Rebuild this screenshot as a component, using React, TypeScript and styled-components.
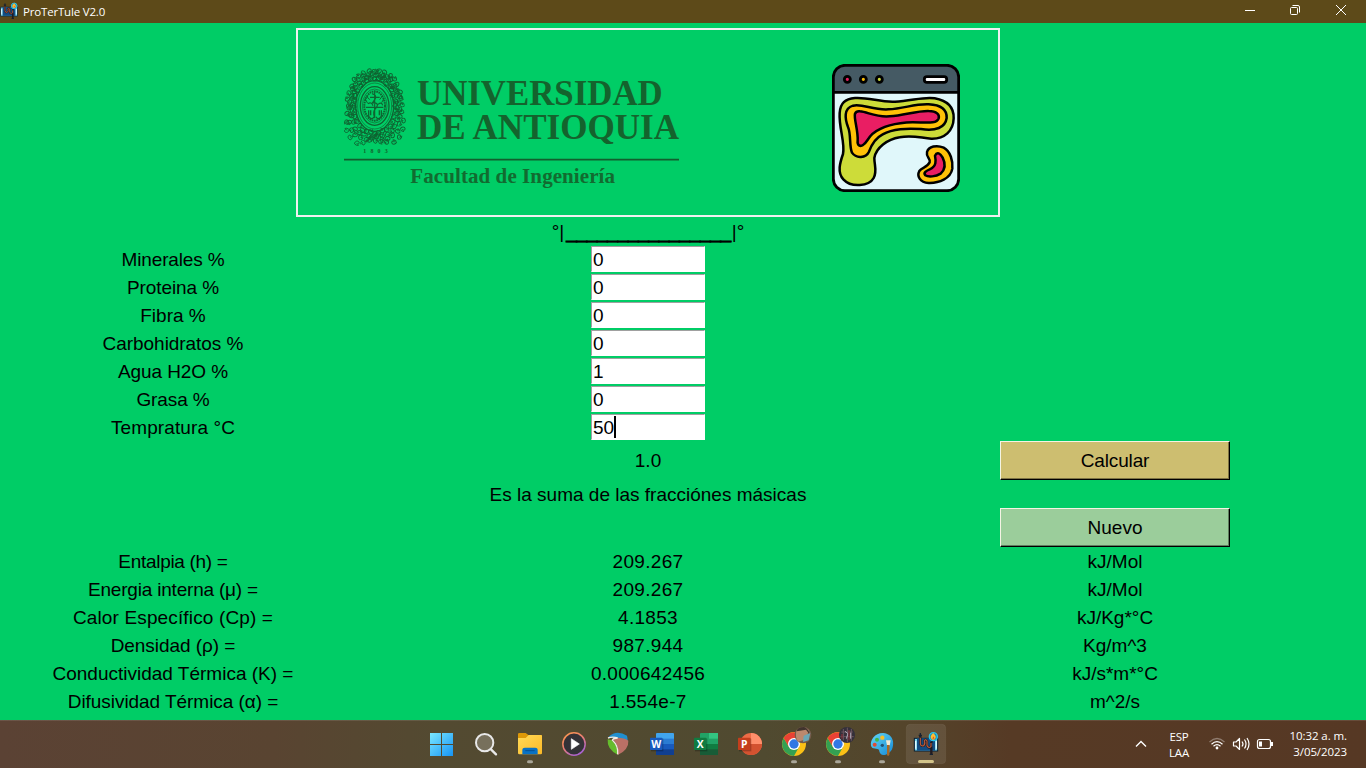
import React from 'react';
import styled, { createGlobalStyle } from 'styled-components';

const GlobalStyle = createGlobalStyle`
  html, body { margin: 0; padding: 0; }
  body { width: 1366px; height: 768px; overflow: hidden; background: #00cd66; }
  svg { display: block; flex: none; }
`;

const ui = `'Open Sans', 'Noto Sans', sans-serif`;

const Screen = styled.div`
  width: 1366px;
  height: 768px;
  display: flex;
  flex-direction: column;
`;

const TitleBar = styled.header`
  height: 23px;
  flex: none;
  display: flex;
  align-items: center;
  background: #5d4a19;
  color: #fff;
`;

const Title = styled.span`
  flex: 1;
  margin-left: 5px;
  font: 11.5px/23px ${ui};
  letter-spacing: -0.18px;
`;

const Client = styled.main`
  height: 697px;
  flex: none;
  box-sizing: border-box;
  padding: 5px 0 0 50px;
  background: #00cd66;
  font: 19px/28px 'Liberation Sans', Arial, sans-serif;
  color: #000;
`;

const Grid = styled.div`
  display: grid;
  grid-template-columns: 246px 704px 230px;
  grid-template-rows: 189px repeat(8, 28px) 39px 28px 39px repeat(6, 28px);
`;

const Banner = styled.div`
  grid-column: 2;
  box-sizing: border-box;
  border: 2px solid #f0f0f0;
  display: flex;
  justify-content: space-between;
  padding: 34px 38px 0 42px;
`;

const Cell = styled.div<{ $col: number; $row?: number; $tall?: boolean; $track?: number }>`
  grid-column: ${p => p.$col};
  grid-row: ${p => p.$row ?? 'auto'};
  height: ${p => (p.$tall ? 39 : 28)}px;
  text-align: center;
  white-space: nowrap;
  line-height: ${p => (p.$tall ? 39 : 30)}px;
  letter-spacing: ${p => p.$track ?? 0}px;
`;

const Rule = styled(Cell)`
  line-height: 29px;
`;

const Dashes = styled.span`
  letter-spacing: -0.28px;
  margin: 0 1px 0 2px;
  -webkit-text-stroke: 0.9px #000;
`;

const Entry = styled.div`
  grid-column: 2;
  justify-self: center;
  box-sizing: border-box;
  width: 114px;
  height: 26px;
  margin-top: 1px;
  padding-left: 1px;
  border: 1px solid #fff;
  border-top-color: #a0a0a0;
  border-left-color: #a0a0a0;
  background: #fff;
  display: flex;
  align-items: flex-start;
  line-height: 26px;
`;

const Caret = styled.span`
  width: 2px;
  height: 22px;
  margin-top: 1px;
  background: #000;
`;

const Button = styled.button<{ $bg: string; $shade: string }>`
  grid-column: 3;
  box-sizing: border-box;
  height: 39px;
  padding: 0;
  border: 1px solid #000;
  border-top-color: #f4f4e4;
  border-left-color: #f4f4e4;
  border-radius: 0;
  box-shadow: inset -1px -1px 0 ${p => p.$shade};
  background: ${p => p.$bg};
  font: inherit;
  letter-spacing: -0.15px;
  color: #000;
`;

const ResetButton = styled(Button)`
  grid-row: 12;
  letter-spacing: 0;
`;

const TaskBar = styled.footer`
  height: 48px;
  flex: none;
  box-sizing: border-box;
  display: flex;
  align-items: stretch;
  justify-content: space-between;
  padding-left: 419px;
  background:
    linear-gradient(180deg, rgba(255,255,255,.1) 0 1px, transparent 1px),
    linear-gradient(90deg, #5b4234 0%, #594431 20%, #534a31 32%, #504a30 56%, #54452b 66%, #563a25 74%, #563824 100%);
`;

const Apps = styled.div`
  display: flex;
`;

const Tray = styled.div`
  width: 227px;
  display: flex;
  color: #fff;
  font: 11.5px/16px ${ui};
  padding: 8px 19px 0 0;
`;

const Language = styled.div`
  width: 42px;
  padding-top: 1px;
  text-align: center;
  letter-spacing: -0.2px;
`;

const Clock = styled.div`
  flex: 1;
  text-align: right;
  letter-spacing: -0.08px;
  white-space: nowrap;
`;

const TrayIcons = styled.div`
  width: 80px;
  margin-top: -8px;
`;

const LogoSvg = styled.svg`
  overflow: visible;
`;

/* Scrolled foliage that surrounds the oval of the coat of arms */
const leaves = Array.from({ length: 128 }, (_, i) => {
  const ring = i % 4;
  const a = (Math.floor(i / 4) * 2 * Math.PI) / 32 + ring * 0.06;
  const rx = 60 + ring * 6 + ((i * 7) % 5);
  const ry = 80 + ring * 7 + ((i * 5) % 6);
  const c = Math.cos(a);
  const s = Math.sin(a);
  const diagonal = (2 * c * s) ** 2;
  const k = 1 + diagonal * (s > 0 ? 0.05 + ring * 0.085 : ring * 0.02);
  return { x: 134 + c * rx * k, y: 152 + s * ry * k, r: (i * 67) % 360 };
});

const UniversityLogo = () => (
  <LogoSvg width="340" height="125" viewBox="30 27 1020 375">
    <g fill="none" stroke="#0f6331">
      {leaves.map((l, i) => (
        <path
          key={i}
          transform={`translate(${l.x} ${l.y}) rotate(${l.r})`}
          d="M-7 3C-6-6 4-8 7-2C8 4 1 6 0 1M-6 4Q0 9 6 7"
          strokeWidth="2.9"
        />
      ))}
      <ellipse cx="134" cy="153" rx="57" ry="76" strokeWidth="4" />
      <ellipse cx="134" cy="153" rx="51" ry="69" strokeWidth="2" />
      <ellipse cx="134" cy="153" rx="43" ry="58" strokeWidth="4" />
      <ellipse cx="134" cy="153" rx="37" ry="51" strokeWidth="2" />
      <ellipse cx="134" cy="153" rx="31" ry="44" strokeWidth="6" strokeDasharray="5 2" />
      <path d="M134 110V190M120 127H149M126 116Q141 120 136 131L127 144Q149 142 139 158Q126 171 134 186M108 157H160M114 146Q124 139 129 152M144 148Q155 139 158 151" strokeWidth="3.5" />
      <path d="M116 166V184Q126 198 132 185M122 166V181M154 166V184Q144 198 138 185M148 166V181" strokeWidth="4" />
      <path d="M113 145L105 131M155 143L162 130M119 134L110 124M149 134L157 123" strokeWidth="3" />
    </g>
    <path d="M42 314H1047" stroke="#125f2e" strokeWidth="5" />
    <g fill="#14632d" fontFamily="'Liberation Serif', serif" fontWeight="bold">
      <text x="100" y="293" fontSize="18" textLength="73">1803</text>
      <text x="261" y="151" fontSize="107" textLength="737" lengthAdjust="spacingAndGlyphs">UNIVERSIDAD</text>
      <text x="261" y="251" fontSize="107" textLength="786" lengthAdjust="spacingAndGlyphs">DE ANTIOQUIA</text>
      <text x="241" y="384" fontSize="63" textLength="614" fill="#126b30">Facultad de Ingeniería</text>
    </g>
  </LogoSvg>
);

const HeatMapIcon = () => (
  <svg width="128" height="128" viewBox="36 27 384 384">
    <rect x="40" y="31" width="376" height="376" rx="35" fill="#e0f7fa" />
    <path d="M40 112V66Q40 31 75 31H381Q416 31 416 66V112Z" fill="#455a64" />
    <g stroke="#000" strokeWidth="8.5" strokeLinejoin="round">
      <path d="M40 112H416" />
      <rect x="40" y="31" width="376" height="376" rx="35" fill="none" />
      <circle cx="82" cy="73" r="9" fill="#e91e63" />
      <circle cx="130" cy="73" r="9" fill="#ffc107" />
      <circle cx="178" cy="73" r="9" fill="#cddc39" />
      <rect x="313" y="65" width="67" height="17" rx="8" fill="#fff" />
      <g strokeWidth="7.5">
        <path fill="#cddc39" d="M105 129C145 126 184 143 225 140C274 138 313 124 344 130C383 137 402 158 401 190C400 228 374 252 334 251C303 249 276 239 239 247C202 253 168 278 163 309C163 331 172 349 161 369C147 394 94 399 70 373C51 352 60 323 69 297C76 263 56 218 59 174C61 144 75 132 105 129Z" />
        <path fill="#ffc107" d="M99 152C127 145 159 166 205 163C253 161 283 146 326 148C363 150 381 164 380 189C376 218 347 229 303 222C260 220 219 220 188 238C163 251 154 270 147 290C138 309 109 312 96 293C87 274 94 239 84 216C75 193 70 160 99 152Z" />
        <path fill="#e91e63" d="M120 169C143 171 169 188 209 184C253 181 291 167 326 168C351 168 359 180 356 190C350 208 318 202 278 202C230 203 184 216 158 236C143 250 140 264 129 270C121 276 111 271 113 258C115 227 101 191 105 176C108 169 113 168 120 169Z" />
        <path fill="#ffc107" d="M321 291C326 274 350 269 371 278C392 289 399 319 397 341C392 371 357 385 326 384C299 382 290 363 298 348C305 337 323 337 329 322C333 311 317 307 321 291Z" />
        <path fill="#e91e63" d="M345 302C351 289 361 295 368 308C377 326 376 343 362 356C347 365 325 367 316 361C309 354 319 347 329 343C350 334 348 317 345 302Z" />
      </g>
    </g>
  </svg>
);

const PipeGlyph = () => (
  <g>
    <rect x="433" y="70" width="70" height="38" fill="#78d5ec" stroke="#0a1e30" strokeWidth="3" />
    <rect x="441" y="70" width="54" height="37" fill="#124d83" />
    <path d="M437 78V101M499 78V101" stroke="#dff8ff" strokeWidth="4" />
    <path d="M451 63V85Q452 95 461 92Q467 86 463 78Q466 70 471 78V92Q477 102 483 94V86Q484 80 488 82M484 94V120" fill="none" stroke="#211b22" strokeWidth="7" />
    <path d="M451 66V85Q452 95 461 92Q467 86 463 78Q466 70 471 78V92Q477 102 483 94V84" fill="none" stroke="#b85a3b" strokeWidth="3.5" />
    <path d="M451 54V68M446 61H456M479 118H489" stroke="#172231" strokeWidth="4" />
    <circle cx="490" cy="65" r="12" fill="#148bb4" stroke="#2ac5ee" strokeWidth="4" />
    <path d="M490 54Q503 67 493 74H486Q476 65 490 54Z" fill="#ffbd32" />
    <path d="M490 64L494 71H487Z" fill="#dd572b" />
  </g>
);

const Chrome = ({ cx }: { cx: number }) => (
  <g transform={`translate(${cx} 87)`}>
    <circle r="36" fill="#fbc116" />
    <path d="M-31-18A36 36 0 0 0 0 36L15 9L-15 9Z" fill="#34a052" />
    <path d="M-31-18L-15 9L0 0L0-17H31A36 36 0 0 0-31-18Z" fill="#e94235" />
    <circle r="18" fill="#fff" />
    <circle r="14" fill="#3178e4" />
  </g>
);

const Slot = ({ box, children }: { box: string; children: React.ReactNode }) => (
  <svg width="44" height="48" viewBox={`${box} 132 144`}>{children}</svg>
);

const Dot = ({ x, y }: { x: number; y: number }) => (
  <rect x={x - 9} y={y - 4.5} width="18" height="9" rx="4.5" fill="#aaa699" />
);

const OfficeMark = ({ x, fill, letter }: { x: number; fill: string; letter: string }) => (
  <g>
    <rect x={x + 3} y="56" width="37" height="38" fill="#000" opacity=".25" />
    <rect x={x} y="53" width="37" height="37" rx="2" fill={fill} />
    <text x={x + 18.5} y="83" textAnchor="middle" fontFamily="'Open Sans', sans-serif" fontWeight="bold" fontSize="31" fill="#fff">{letter}</text>
  </g>
);

const TaskIcons = () => (
  <Apps>
    <Slot box="-3 0">
      <defs>
        <linearGradient id="win" x1="30" y1="39" x2="99" y2="108" gradientUnits="userSpaceOnUse">
          <stop stopColor="#7be8ff" /><stop offset="1" stopColor="#1694f5" />
        </linearGradient>
      </defs>
      <path fill="url(#win)" d="M30 39H63V72H30ZM66 39H99V72H66ZM30 75H63V108H30ZM66 75H99V108H66Z" />
    </Slot>
    <Slot box="129 0">
      <circle cx="194" cy="68" r="26" fill="#77705c" stroke="#e8e8e8" strokeWidth="6" />
      <path d="M213 88L228 103" stroke="#e8e8e8" strokeWidth="7" strokeLinecap="round" />
    </Slot>
    <Slot box="261 0">
      <defs>
        <linearGradient id="folder" x1="0" y1="0" x2="1" y2="1">
          <stop stopColor="#ffda58" /><stop offset="1" stopColor="#fcb927" />
        </linearGradient>
      </defs>
      <path d="M294 58V42Q294 39 298 39H317L325 45H363Q366 45 366 49V58Z" fill="#dd9808" />
      <path d="M294 54H317L326 45H363Q366 45 366 49V100Q366 103 362 103H298Q294 103 294 99Z" fill="url(#folder)" />
      <path d="M307 103V89Q307 83 314 83H346Q353 83 353 89V103Z" fill="#0972c4" />
      <path d="M316 92H344" stroke="#054f91" strokeWidth="3" />
      <Dot x={330} y={125} />
    </Slot>
    <Slot box="393 0">
      <defs>
        <linearGradient id="media" x1="0" y1="0" x2="0.6" y2="1">
          <stop stopColor="#ff9b4a" /><stop offset=".5" stopColor="#ea7f70" /><stop offset="1" stopColor="#aa62ce" />
        </linearGradient>
      </defs>
      <circle cx="462" cy="72" r="33.5" fill="#333237" stroke="url(#media)" strokeWidth="4.5" />
      <path d="M454 56L478 72L454 88Z" fill="#fff" stroke="#fff" strokeWidth="2" strokeLinejoin="round" />
    </Slot>
    <Slot box="15 0">
      <path d="M56 50Q80 28 111 47Q113 55 113 62L74 56Z" fill="#208fd0" />
      <path d="M74 54Q99 51 115 62Q117 89 83 105Q89 79 70 59Z" fill="#ba7066" />
      <path d="M53 58Q50 88 83 104Q86 77 64 60Z" fill="#65bd2d" />
      <path d="M54 54Q68 49 83 54Q71 54 67 60Q86 78 83 103" fill="none" stroke="#f1ebe1" strokeWidth="4" />
    </Slot>
    <Slot box="147 0">
      <rect x="198" y="39" width="54" height="66" rx="3" fill="#41a5ee" />
      <path d="M198 56H252V105H198Z" fill="#2b7cd3" />
      <path d="M198 72H252V105H198Z" fill="#185abd" />
      <path d="M198 88H252V105H198Z" fill="#103f91" />
      <OfficeMark x={180} fill="#185abd" letter="W" />
    </Slot>
    <Slot box="279 0">
      <rect x="330" y="39" width="54" height="66" rx="3" fill="#21a366" />
      <path d="M357 39H384V56H357Z" fill="#33c481" />
      <path d="M330 72H384V105H330Z" fill="#107c41" />
      <path d="M330 88H384V105H330Z" fill="#185c37" />
      <OfficeMark x={312} fill="#107c41" letter="X" />
    </Slot>
    <Slot box="411 0">
      <circle cx="483" cy="72" r="33" fill="#ed6c47" />
      <path d="M483 39A33 33 0 0 1 516 72H483Z" fill="#ff8f6b" />
      <path d="M450 72H516A33 33 0 0 1 450 72Z" fill="#d35230" />
      <OfficeMark x={444} fill="#c43e1c" letter="P" />
    </Slot>
    <Slot box="3 15">
      <Chrome cx={72} />
      <circle cx="99" cy="60" r="25" fill="#745b4b" />
      <path d="M79 47Q99 29 116 45L109 73L84 80Q75 67 79 47Z" fill="#bc896e" />
      <path d="M79 49Q83 36 102 36Q117 42 118 57L108 44L90 47Z" fill="#41342d" />
      <path d="M101 62L121 54L116 76L99 81Z" fill="#6ba7b6" />
      <Dot x={72} y={140} />
    </Slot>
    <Slot box="135 15">
      <Chrome cx={204} />
      <circle cx="231" cy="60" r="24" fill="#34303a" />
      <path d="M214 51H248M211 65H251M220 42V76M232 38V82M244 42V77" stroke="#6e5660" strokeWidth="3" />
      <path d="M225 49L234 56L229 71M242 53V71" stroke="#b0aab8" strokeWidth="3" fill="none" />
      <path d="M216 57V71M237 45V76" stroke="#7e3039" strokeWidth="4" />
      <Dot x={204} y={140} />
    </Slot>
    <Slot box="267 15">
      <defs>
        <linearGradient id="paint" x1="0" y1="0" x2="1" y2="1">
          <stop stopColor="#62d6f8" /><stop offset="1" stopColor="#168ad4" />
        </linearGradient>
      </defs>
      <path d="M340 54C315 53 300 75 303 92C306 105 323 97 327 105C329 118 336 122 347 119C366 113 371 97 369 79C366 63 354 55 340 54Z" fill="url(#paint)" />
      <circle cx="337" cy="68" r="6.5" fill="#f7be2b" />
      <circle cx="321" cy="74" r="6" fill="#43b647" />
      <circle cx="314" cy="89" r="6" fill="#df4b35" />
      <circle cx="337" cy="91" r="5" fill="#235174" />
      <path d="M348 76H362L359 92H351Z" fill="#f0e8d5" />
      <path d="M351 90H359L358 119Q354 126 351 119Z" fill="#a86826" />
      <Dot x={336} y={140} />
    </Slot>
    <Slot box="399 15">
      <rect x="409" y="28" width="118" height="118" rx="11" fill="#fff" fillOpacity=".09" stroke="#fff" strokeOpacity=".08" strokeWidth="2" />
      <PipeGlyph />
      <rect x="444" y="135" width="48" height="9" rx="4.5" fill="#d3c48a" />
    </Slot>
  </Apps>
);

const fields: [string, string, number][] = [
  ['Minerales %', '0', -0.15],
  ['Proteina %', '0', -0.1],
  ['Fibra %', '0', 0],
  ['Carbohidratos %', '0', -0.05],
  ['Agua H2O %', '1', -0.1],
  ['Grasa %', '0', -0.1],
  ['Tempratura °C', '50', 0.1],
];

const results: [string, string, string, number][] = [
  ['Entalpia (h) =', '209.267', 'kJ/Mol', -0.3],
  ['Energia interna (μ) =', '209.267', 'kJ/Mol', -0.2],
  ['Calor Específico (Cp) =', '4.1853', 'kJ/Kg*°C', 0.14],
  ['Densidad (ρ) =', '987.944', 'Kg/m^3', -0.05],
  ['Conductividad Térmica (K) =', '0.000642456', 'kJ/s*m*°C', 0],
  ['Difusividad Térmica (α) =', '1.554e-7', 'm^2/s', -0.05],
];

const FIRST_RESULT_ROW = 13;

export default function App() {
  return (
    <Screen>
      <GlobalStyle />
      <TitleBar>
        <svg width="18" height="23" viewBox="430 40 76 97"><PipeGlyph /></svg>
        <Title>ProTerTule V2.0</Title>
        <svg width="146" height="23" viewBox="0 0 146 23" fill="none" stroke="#fff">
          <path d="M25 10.5H35" />
          <rect x="70.5" y="7.5" width="7" height="7" rx="1" />
          <path d="M72.5 5.5H78Q79.5 5.5 79.5 7V12.5" />
          <path d="M116 5L126 15M126 5L116 15" />
        </svg>
      </TitleBar>
      <Client>
        <Grid>
          <Banner>
            <UniversityLogo />
            <HeatMapIcon />
          </Banner>
          <Rule $col={2}>°|<Dashes>________________</Dashes>|°</Rule>
          {fields.map(([label, value, track], i) => (
            <React.Fragment key={label}>
              <Cell $col={1} $track={track}>{label}</Cell>
              <Entry>
                {value}
                {i === fields.length - 1 && <Caret />}
              </Entry>
            </React.Fragment>
          ))}
          <Cell $col={2} $tall>1.0</Cell>
          <Button $bg="#cdbe70" $shade="#7d7445">Calcular</Button>
          <Cell $col={2}>Es la suma de las fracciónes másicas</Cell>
          <ResetButton $bg="#9bcd9b" $shade="#5f7d5f">Nuevo</ResetButton>
          {results.map(([label, value, unit, track], i) => (
            <React.Fragment key={label}>
              <Cell $row={FIRST_RESULT_ROW + i} $col={1} $track={track}>{label}</Cell>
              <Cell $row={FIRST_RESULT_ROW + i} $col={2} $track={0.3}>{value}</Cell>
              <Cell $row={FIRST_RESULT_ROW + i} $col={3}>{unit}</Cell>
            </React.Fragment>
          ))}
        </Grid>
      </Client>
      <TaskBar>
        <TaskIcons />
        <Tray>
          <svg width="38" height="40" viewBox="1120 728 38 40" fill="none" stroke="#fff" strokeWidth="1.4">
            <path d="M1136 746.5L1141 741.5L1146 746.5" />
          </svg>
          <Language>ESP<br />LAA</Language>
          <TrayIcons>
            <svg width="80" height="48" viewBox="1200 720 80 48" fill="none" stroke="#fff" strokeWidth="1.2">
              <path d="M1209.5 742Q1217 735 1224.5 742" opacity=".35" />
              <path d="M1211.5 744.2Q1217 739 1222.5 744.2M1213.5 746.3Q1217 743 1220.5 746.3" />
              <circle cx="1217" cy="748" r="1.4" fill="#fff" stroke="none" />
              <path d="M1233.5 742H1236L1239.5 738.5V749.5L1236 746H1233.5ZM1242 741.5Q1244 744 1242 746.5M1244.5 739.5Q1247.5 744 1244.5 748.5M1247 738Q1251 744 1247 750" strokeLinejoin="round" />
              <rect x="1257.5" y="739.5" width="13" height="9" rx="2" />
              <path d="M1259 741.5H1262V746.5H1259Z" fill="#fff" stroke="none" />
              <path d="M1272 742V746" strokeWidth="2" />
            </svg>
          </TrayIcons>
          <Clock>10:32 a. m.<br />3/05/2023</Clock>
        </Tray>
      </TaskBar>
    </Screen>
  );
}
